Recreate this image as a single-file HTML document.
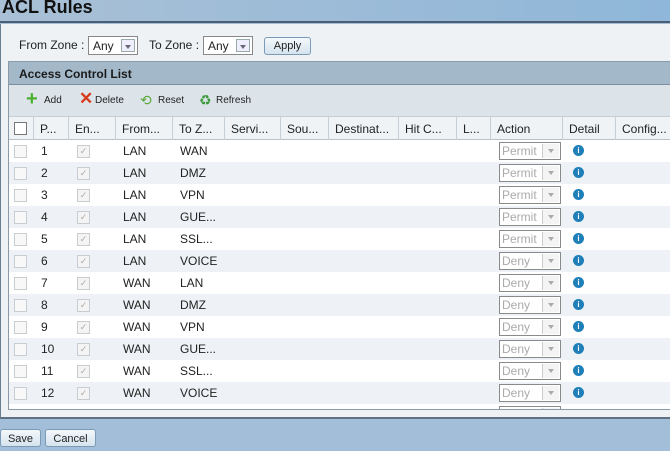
<!DOCTYPE html><html><head><style>
*{margin:0;padding:0;box-sizing:border-box}
body{width:670px;height:451px;overflow:hidden;background:#a3bed8;font-family:"Liberation Sans",sans-serif;font-size:11px;color:#222;position:relative}
.title{position:absolute;left:0;top:0;width:670px;height:23px;background:linear-gradient(90deg,#a9c0d6,#8fb7d9);border-bottom:2px solid #4b5e72}
.title span{position:absolute;left:2px;top:-3px;font-size:18px;font-weight:bold;color:#111}
.outer{position:absolute;left:0;top:24px;width:670px;height:395px;background:#eef2f5;border-left:1px solid #6b7f90;border-bottom:2px solid #5e7284}
.filter{position:absolute;left:18px;top:14px;font-size:12px;color:#222}
.sel{position:absolute;top:12px;height:19px;border:1px solid #888;background:#fff;font-size:12px;padding:2px 4px}
.sel i{position:absolute;right:2px;top:2px;width:14px;height:13px;border:1px solid #9aa;background:#eef;}
.sel i:after{content:"";position:absolute;left:3px;top:5px;border:3px solid transparent;border-top:4px solid #667}
.btn{position:absolute;border:1px solid #7a9ab5;border-radius:3px;background:linear-gradient(#f4f8fb,#d5e3ee);font-size:11px;text-align:center;color:#222}
.grid{position:absolute;left:7px;top:37px;width:663px;height:349px;border:1px solid #8a9aa8;background:#fff;overflow:hidden}
.gh{height:23px;background:#a3b8c8;border-bottom:1px solid #7e8e9c;font-weight:bold;font-size:12px;padding:5px 0 0 10px;color:#1a1a1a}
.tb{height:31px;background:#dce4ea;position:relative;font-size:10px}
.tb span{position:absolute;top:10px}
.ch{height:24px;background:#f0f3f6;border-bottom:1px solid #b8c2ca;border-top:1px solid #c5ced6;position:relative;font-size:12px}
.ch div{position:absolute;top:0;height:23px;border-right:1px solid #c5ced6;padding:5px 0 0 6px}
.row{height:22px;position:relative;font-size:12px}
.row:nth-child(even){background:#eef2f6}
.row div{position:absolute;top:4px}
.cb{width:13px;height:13px;border:1px solid #c8cdd2;background:#f8f8f8;top:5px!important}
.ck{width:13px;height:13px;border:1px solid #c8cdd2;background:#f4f4f4;color:#aaa;font-size:9px;line-height:11px;text-align:center;top:5px!important}
.act{left:490px;width:62px;height:18px;border:1px solid #8a8a8a;background:#fff;color:#aaa;font-size:12px;padding:1px 2px;top:2px!important}
.act b{position:absolute;right:1px;top:1px;width:17px;height:14px;border-left:1px solid #ccc;background:#f4f4f4}
.act b:after{content:"";position:absolute;left:5px;top:5px;border:3px solid transparent;border-top:4px solid #aaa}
.inf{left:564px;width:11px;height:11px;border-radius:50%;background:#1f7fb8;color:#fff;font-size:8px;font-weight:bold;text-align:center;line-height:11px;top:5px!important}
</style></head><body>
<div class="title"><span>ACL Rules</span></div>
<div class="outer">
<div class="filter">From Zone :</div>
<div class="sel" style="left:87px;width:50px">Any<i></i></div>
<div class="filter" style="left:148px">To Zone :</div>
<div class="sel" style="left:202px;width:50px">Any<i></i></div>
<div class="btn" style="left:263px;top:13px;width:47px;height:18px;padding-top:2px">Apply</div>
<div class="grid">
<div class="gh">Access Control List</div>
<div class="tb">
<span style="left:17px;top:6px;color:#4caf30;font-size:20px;font-weight:bold;line-height:16px">+</span><span style="left:35px">Add</span>
<span style="left:70px;top:6px;color:#d63a1a;font-size:17px;font-weight:bold;line-height:16px">✕</span><span style="left:86px">Delete</span>
<span style="left:131px;top:7px;color:#5ba83a;font-size:14px;line-height:16px">⟲</span><span style="left:149px">Reset</span>
<span style="left:190px;top:7px;color:#3c9a3a;font-size:14px;line-height:16px">♻</span><span style="left:207px">Refresh</span>
</div>
<div class="ch">
<div style="left:0;width:25px;padding:5px 0 0 5px"><span style="display:block;width:13px;height:13px;border:1px solid #777;background:#fff"></span></div>
<div style="left:25px;width:35px">P...</div><div style="left:60px;width:47px">En...</div><div style="left:107px;width:57px">From...</div><div style="left:164px;width:52px">To Z...</div><div style="left:216px;width:56px">Servi...</div><div style="left:272px;width:48px">Sou...</div><div style="left:320px;width:70px">Destinat...</div><div style="left:390px;width:58px">Hit C...</div><div style="left:448px;width:34px">L...</div><div style="left:482px;width:72px">Action</div><div style="left:554px;width:53px">Detail</div><div style="left:607px;width:60px;border:0">Config...</div>
</div>
<div>
<div class="row"><div class="cb" style="left:5px"></div><div style="left:32px">1</div><div class="ck" style="left:68px">✓</div><div style="left:114px">LAN</div><div style="left:171px">WAN</div><div class="act">Permit<b></b></div><div class="inf">i</div></div>
<div class="row"><div class="cb" style="left:5px"></div><div style="left:32px">2</div><div class="ck" style="left:68px">✓</div><div style="left:114px">LAN</div><div style="left:171px">DMZ</div><div class="act">Permit<b></b></div><div class="inf">i</div></div>
<div class="row"><div class="cb" style="left:5px"></div><div style="left:32px">3</div><div class="ck" style="left:68px">✓</div><div style="left:114px">LAN</div><div style="left:171px">VPN</div><div class="act">Permit<b></b></div><div class="inf">i</div></div>
<div class="row"><div class="cb" style="left:5px"></div><div style="left:32px">4</div><div class="ck" style="left:68px">✓</div><div style="left:114px">LAN</div><div style="left:171px">GUE...</div><div class="act">Permit<b></b></div><div class="inf">i</div></div>
<div class="row"><div class="cb" style="left:5px"></div><div style="left:32px">5</div><div class="ck" style="left:68px">✓</div><div style="left:114px">LAN</div><div style="left:171px">SSL...</div><div class="act">Permit<b></b></div><div class="inf">i</div></div>
<div class="row"><div class="cb" style="left:5px"></div><div style="left:32px">6</div><div class="ck" style="left:68px">✓</div><div style="left:114px">LAN</div><div style="left:171px">VOICE</div><div class="act">Deny<b></b></div><div class="inf">i</div></div>
<div class="row"><div class="cb" style="left:5px"></div><div style="left:32px">7</div><div class="ck" style="left:68px">✓</div><div style="left:114px">WAN</div><div style="left:171px">LAN</div><div class="act">Deny<b></b></div><div class="inf">i</div></div>
<div class="row"><div class="cb" style="left:5px"></div><div style="left:32px">8</div><div class="ck" style="left:68px">✓</div><div style="left:114px">WAN</div><div style="left:171px">DMZ</div><div class="act">Deny<b></b></div><div class="inf">i</div></div>
<div class="row"><div class="cb" style="left:5px"></div><div style="left:32px">9</div><div class="ck" style="left:68px">✓</div><div style="left:114px">WAN</div><div style="left:171px">VPN</div><div class="act">Deny<b></b></div><div class="inf">i</div></div>
<div class="row"><div class="cb" style="left:5px"></div><div style="left:32px">10</div><div class="ck" style="left:68px">✓</div><div style="left:114px">WAN</div><div style="left:171px">GUE...</div><div class="act">Deny<b></b></div><div class="inf">i</div></div>
<div class="row"><div class="cb" style="left:5px"></div><div style="left:32px">11</div><div class="ck" style="left:68px">✓</div><div style="left:114px">WAN</div><div style="left:171px">SSL...</div><div class="act">Deny<b></b></div><div class="inf">i</div></div>
<div class="row"><div class="cb" style="left:5px"></div><div style="left:32px">12</div><div class="ck" style="left:68px">✓</div><div style="left:114px">WAN</div><div style="left:171px">VOICE</div><div class="act">Deny<b></b></div><div class="inf">i</div></div>
<div class="row"><div class="cb" style="left:5px"></div><div class="ck" style="left:68px"></div><div class="act"><b></b></div><div class="inf">i</div></div>
</div>
</div>
</div>
<div class="btn" style="left:0;top:429px;width:41px;height:18px;padding-top:3px">Save</div>
<div class="btn" style="left:45px;top:429px;width:51px;height:18px;padding-top:3px">Cancel</div>
</body></html>
